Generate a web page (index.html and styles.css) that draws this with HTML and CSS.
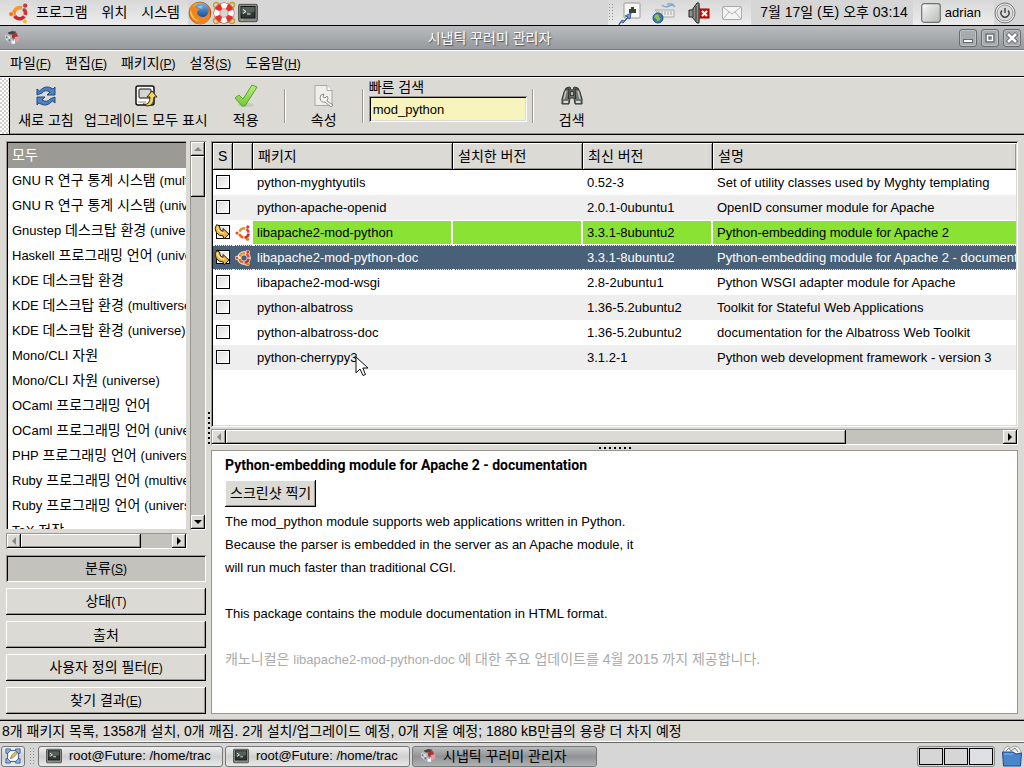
FILE: index.html
```html
<!DOCTYPE html>
<html lang="ko">
<head>
<meta charset="utf-8">
<title>시냅틱 꾸러미 관리자</title>
<link rel="stylesheet" href="styles.css">
</head>
<body>
<svg class="defs" aria-hidden="true">
  <defs>
    <radialGradient id="fox" cx=".4" cy=".3" r=".8"><stop offset="0" stop-color="#ffd34a"/><stop offset=".5" stop-color="#f08a1c"/><stop offset="1" stop-color="#b83b0c"/></radialGradient>
    <linearGradient id="globe" x2="0" y2="1"><stop offset="0" stop-color="#6fb4e8"/><stop offset="1" stop-color="#16488f"/></linearGradient>
    <linearGradient id="metal" x2="1" y2="1"><stop offset="0" stop-color="#fafafa"/><stop offset="1" stop-color="#b4b8b2"/></linearGradient>
    <linearGradient id="tick" x2="0" y2="1"><stop offset="0" stop-color="#b6f07c"/><stop offset="1" stop-color="#74c838"/></linearGradient>
    <symbol id="ubuntu" viewBox="0 0 22 22">
      <g fill="none" stroke-width="3.6">
        <path d="M6.3 9A6 6 0 0 1 14 5.4" stroke="#f39a2b" transform="translate(0 .6)"/>
        <path d="M15.2 6.6A6 6 0 0 1 17.3 13" stroke="#c43a35"/>
        <path d="M16.4 14.4A6 6 0 0 1 6.6 14" stroke="#d2262b"/>
        <path d="M6.3 13.6A6 6 0 0 1 6.2 9" stroke="#ee7c22"/>
      </g>
      <g stroke="#fff" stroke-width=".6"><circle cx="3.2" cy="12" r="2.6" fill="#ee7c22"/><circle cx="17.2" cy="3.6" r="2.6" fill="#c03a44"/><circle cx="17" cy="19.4" r="2.5" fill="#f6bd2c"/></g>
    </symbol>
    <symbol id="ubuntu-small" viewBox="0 0 16 16">
      <g fill="currentColor"><circle cx="9" cy="8" r="4.700" fill="none" stroke="currentColor" stroke-width="4"/><circle cx="2.300" cy="8" r="2.300"/><circle cx="12.600" cy="2.300" r="2.300"/><circle cx="12.300" cy="13.700" r="2.300"/></g>
      <g fill="none" stroke-width="2.6">
        <path d="M4.600 6.600A4.600 4.600 0 0 1 10.200 3.500" stroke="#f28a2c"/>
        <path d="M11.400 4A4.600 4.600 0 0 1 13.6 7.6" stroke="#e8432c"/>
        <path d="M13.6 8.6A4.6 4.6 0 0 1 9.5 12.6" stroke="#d8231f"/>
        <path d="M8.400 12.5A4.6 4.6 0 0 1 4.5 9" stroke="#f0641e"/>
      </g>
      <circle cx="2" cy="8" r="1.600" fill="#ee4b1f"/><circle cx="12.800" cy="1.900" r="1.600" fill="#de3a28"/><circle cx="12.500" cy="14.200" r="1.600" fill="#ef7b20"/>
    </symbol>
    <symbol id="terminal" viewBox="0 0 20 19">
      <rect x=".7" y=".7" width="18.6" height="17.6" rx="1.5" fill="#888b86" stroke="#3e413e"/>
      <rect x="3" y="3" width="14" height="11.5" fill="#2f3734" stroke="#171b19"/>
      <path d="M3.5 3.5h13v5l-13 2z" fill="#56605b"/>
      <path d="M5 6l3 2-3 2M9 10.5h3.5" fill="none" stroke="#fff"/>
      <path d="M3 16.5h2" stroke="#8ae234"/>
    </symbol>
    <symbol id="synaptic" viewBox="0 0 18 18">
      <path d="M1 6l5-4 7 1 4 5-2 5-5 3-5-2-4-4z" fill="#b3b5ba"/>
      <path d="M4 3l5-2 5 1-3 3-5 0z" fill="#4a4043"/>
      <path d="M9 5l5-2 2 4-5 4-2-2z" fill="#a5342e"/>
      <path d="M12 8l5-1 0 5-4 2z" fill="#e79aa1"/>
      <path d="M1 6l6 1v6l-5-2z" fill="#d5dade"/>
      <path d="M2 7l2 .5v2L2 9zM5 10l2 .5V13l-2-.6z" fill="#6b707a"/>
      <path d="M8 10l5 0v6H8z" fill="#f8fafc" stroke="#8590a0" stroke-width=".7"/>
      <path d="M9.500 10h2v2h-2z" fill="#8590a0"/>
    </symbol>
    <symbol id="mark" viewBox="0 0 17 16">
      <path d="M2.500 .8Q6 .6 6 4.300Q6.300 7 9 7.300V4.500l6 5.500-5 5-.8-3Q5 12.200 2.300 8.500Q0 4.500 2.500 .8z" fill="#eab440" stroke="#2b1f08"/>
      <path d="M3.200 2.300Q3.600 8.400 10.200 9.200" fill="none" stroke="#fce9a8" stroke-width="1.300"/>
    </symbol>
  </defs>
</svg>

<header class="panel">
  <nav class="launch">
    <svg class="i22" viewBox="0 0 22 22"><use href="#ubuntu"/></svg>
    <a href="#">프로그램</a><a href="#">위치</a><a href="#">시스템</a>
  </nav>
  <div class="shortcuts">
    <svg class="i24" viewBox="0 0 24 24"><circle cx="12" cy="12" r="11" fill="url(#fox)" stroke="#9a3c10" stroke-width=".6"/><circle cx="13" cy="9.5" r="7.6" fill="url(#globe)"/><path d="M1.5 7Q3 4 5 3q0 3 3 3.500 3 .5 4 2-3 .8-3 3.500 1.500 4 6 4 5 0 6-6 3 7-2 11-5 4-11 1Q2 18 1.500 7z" fill="#ef8420"/><path d="M3 9q1 8 8 11-7 0-9-8z" fill="#ffc94d"/><path d="M9 6q2-2 6-1-2 2-1 3z" fill="#8ec6ee"/></svg>
    <svg class="i24" viewBox="0 0 24 24"><g fill="none" stroke="#c7a21e" stroke-width="1.4"><circle cx="4" cy="4" r="2.500"/><circle cx="20" cy="4" r="2.500"/><circle cx="4" cy="20" r="2.500"/><circle cx="20" cy="20" r="2.500"/></g><circle cx="12" cy="12" r="7.200" fill="none" stroke="#c93a2a" stroke-width="6.600"/><circle cx="12" cy="12" r="7.200" fill="none" stroke="#fff" stroke-width="5.600"/><circle cx="12" cy="12" r="7.200" fill="none" stroke="#e0342a" stroke-width="5.600" stroke-dasharray="5.650 5.650" stroke-dashoffset="8.500"/></svg>
    <svg class="i20" viewBox="0 0 20 19"><use href="#terminal"/></svg>
  </div>
  <div class="tray">
    <i class="dots"></i>
    <svg class="i24" viewBox="0 0 24 24"><rect x="6" y="2" width="16" height="15" rx="1" fill="#f6f6f4" stroke="#9a9c98"/><path d="M11 12V8h2V6h3v2h2v4z" fill="#3c3f3a"/><path d="M1 23l3-4 2 1 4-4-3-1 6-3-1 6-2-1-5 5-2-1-2 3z" fill="#6d9ad2" stroke="#24508c" stroke-width=".8"/></svg>
    <svg class="i24" viewBox="0 0 24 24"><path d="M10 4q3 3 7 1t6 1M15 3q3-1 7 1" fill="none" stroke="#86a8d4" stroke-width="1.500"/><path d="M3 9h19v7H9z" fill="#ecece8" stroke="#a9aba6"/><path d="M6 11h14M6 13h14" stroke="#a9aba6" stroke-dasharray="2 1"/><circle cx="6" cy="17" r="5" fill="#3d74bc" stroke="#24508c"/><path d="M3 14q4-2 4 1t2 2q-2 4-4 3 0-3-3-3zM8 13l2 2" fill="#8fc342"/></svg>
    <svg class="i24" viewBox="0 0 24 24"><path d="M3 9h3l5-7h2v20h-2l-5-6H3z" fill="#8f928c" stroke="#222"/><path d="M7 8v8M10 5v15" stroke="#333"/><path d="M13 4q3 8 0 16" fill="none" stroke="#555"/><rect x="14" y="8" width="9" height="9" fill="#d80c0c" stroke="#a40000"/><path d="M16 10l5 5M21 10l-5 5" stroke="#fff" stroke-width="2"/></svg>
    <svg class="i24" viewBox="0 0 24 24"><rect x="2.500" y="5.500" width="19" height="13" rx="1" fill="#f4f4f4" stroke="#a8a8a8"/><path d="M3 6l9 7 9-7M3 18l6-7M21 18l-6-7" fill="none" stroke="#b2b2b2"/></svg>
  </div>
  <time class="clock">7월 17일 (토) 오후 03:14</time>
  <div class="user">
    <svg class="i20" viewBox="0 0 20 20"><rect x=".7" y=".7" width="18.600" height="18.600" rx="2.500" fill="url(#metal)" stroke="#6f736e" stroke-width="1.200"/></svg>
    <span>adrian</span>
  </div>
  <svg class="i22 power" viewBox="0 0 22 22"><circle cx="11" cy="11" r="10" fill="#eee" stroke="#777"/><circle cx="11" cy="11" r="8" fill="#d9d9d7" stroke="#999"/><path d="M8 8.500a4 4 0 1 0 6 0M11 6v5" fill="none" stroke="#333" stroke-width="1.300"/></svg>
</header>

<div class="titlebar">
  <svg class="i16" viewBox="0 0 18 18"><use href="#synaptic"/></svg>
  <h1>시냅틱 꾸러미 관리자</h1>
  <button class="wm" aria-label="최소화"><svg viewBox="0 0 16 16"><rect x="3.500" y="9.500" width="9" height="3" fill="#fff" stroke="#666b70"/></svg></button>
  <button class="wm" aria-label="최대화"><svg viewBox="0 0 16 16"><rect x="5.500" y="5.500" width="5" height="5" fill="none" stroke="#5f6469" stroke-width="4"/><rect x="5.500" y="5.500" width="5" height="5" fill="#777" stroke="#fff" stroke-width="1.500"/></svg></button>
  <button class="wm" aria-label="닫기"><svg viewBox="0 0 16 16"><path d="M3.500 3.500l9 9M12.500 3.500l-9 9" stroke="#5f6469" stroke-width="4.500"/><path d="M4 4l8 8M12 4l-8 8" stroke="#fff" stroke-width="2.600"/></svg></button>
</div>

<nav class="menubar">
  <a href="#">파일<span class="key">(<u>F</u>)</span></a><a href="#">편집<span class="key">(<u>E</u>)</span></a><a href="#">패키지<span class="key">(<u>P</u>)</span></a><a href="#">설정<span class="key">(<u>S</u>)</span></a><a href="#">도움말<span class="key">(<u>H</u>)</span></a>
</nav>

<div class="toolbar">
  <i class="handle"></i>
  <button class="tool"><svg viewBox="0 0 24 24"><path d="M3 11V5l2.500 2Q12 0 19 5l2-2v8h-8l3-3q-5-3-8 1z" fill="#4f81bf" stroke="#204a87"/><path d="M21 13v6l-2.500-2Q12 24 5 19l-2 2v-8h8l-3 3q5 3 8-1z" fill="#4f81bf" stroke="#204a87"/></svg>새로 고침</button>
  <button class="tool"><svg viewBox="0 0 24 24"><rect x="2" y="2" width="18" height="19" rx="2" fill="#fff" stroke="#111" stroke-width="1.500"/><rect x="5" y="5" width="12" height="9" rx="1" fill="#d4d6d0" stroke="#111"/><path d="M4 18h8" stroke="#888"/><path d="M9 20q7 2 7-7h-3l5-6 5 6h-3q0 9-7 9z" fill="#f3d56f" stroke="#3b2a08"/></svg>업그레이드 모두 표시</button>
  <button class="tool"><svg viewBox="0 0 24 24"><ellipse cx="12" cy="21" rx="8" ry="2" fill="#c8c7c2"/><path d="M1 14l4-3 4 4L18 1l5 2-12 19H8z" fill="url(#tick)" stroke="#5aa02c" stroke-linejoin="round"/></svg>적용</button>
  <i class="sep"></i>
  <button class="tool"><svg viewBox="0 0 24 24"><path d="M3 1.500h12l5 5v15H3z" fill="#efefec" stroke="#a8a8a4"/><path d="M15 1.500v5h5" fill="#fff" stroke="#a8a8a4"/><path d="M8 14q0-4 4-4l-1 3 2 1 2-2q2 2 0 5l6 4-2 2-6-5q-4 1-5-4z" fill="#f8f8f6" stroke="#8b8b87"/></svg>속성</button>
  <i class="sep"></i>
  <div class="quick">
    <label for="quick">빠른 검색</label>
    <input id="quick" type="text" value="mod_python">
  </div>
  <i class="sep"></i>
  <button class="tool"><svg viewBox="0 0 24 24"><path d="M6 4l4-1 1 3h2l1-3 4 1 2 4 2 7v5h-7l-1-6h-4l-1 6H2v-5l2-7z" fill="#6f7470" stroke="#2b2f2d"/><path d="M10 7h4v5h-4z" fill="#3a3e3c"/><path d="M12 8v3" stroke="#b9bcb8" stroke-width="2"/><path d="M3.500 17h4.500v2H3.500zM16 17h4.500v2H16z" fill="#d7d9d6"/><path d="M6 7l-2 8M18 7l2 8" stroke="#c0c3bf" stroke-width="1.500"/><path d="M9 5l-.5 10M15 5l.5 10M6 5h3M15 5h3" stroke="#2e3331" stroke-width="1.200"/></svg>검색</button>
</div>

<main class="main">
  <section class="side">
    <div class="side-grid">
      <ul class="list" role="listbox" aria-label="분류">
        <li class="on" role="option" aria-selected="true">모두</li>
        <li role="option"><span class="latin">GNU R</span> 연구 통계 시스탬 <span class="latin">(multiverse)</span></li>
        <li role="option"><span class="latin">GNU R</span> 연구 통계 시스탬 <span class="latin">(universe)</span></li>
        <li role="option"><span class="latin">Gnustep</span> 데스크탑 환경 <span class="latin">(universe)</span></li>
        <li role="option"><span class="latin">Haskell</span> 프로그래밍 언어 <span class="latin">(universe)</span></li>
        <li role="option"><span class="latin">KDE</span> 데스크탑 환경</li>
        <li role="option"><span class="latin">KDE</span> 데스크탑 환경 <span class="latin">(multiverse)</span></li>
        <li role="option"><span class="latin">KDE</span> 데스크탑 환경 <span class="latin">(universe)</span></li>
        <li role="option"><span class="latin">Mono/CLI</span> 자원</li>
        <li role="option"><span class="latin">Mono/CLI</span> 자원 <span class="latin">(universe)</span></li>
        <li role="option"><span class="latin">OCaml</span> 프로그래밍 언어</li>
        <li role="option"><span class="latin">OCaml</span> 프로그래밍 언어 <span class="latin">(universe)</span></li>
        <li role="option"><span class="latin">PHP</span> 프로그래밍 언어 <span class="latin">(universe)</span></li>
        <li role="option"><span class="latin">Ruby</span> 프로그래밍 언어 <span class="latin">(multiverse)</span></li>
        <li role="option"><span class="latin">Ruby</span> 프로그래밍 언어 <span class="latin">(universe)</span></li>
        <li role="option"><span class="latin">TeX</span> 저작</li>
      </ul>
      <div class="sb v"><button class="up off" aria-label="위로"></button><i class="thumb"></i><button class="down" aria-label="아래로"></button></div>
      <div class="sb h"><button class="left off" aria-label="왼쪽"></button><i class="thumb"></i><button class="right" aria-label="오른쪽"></button></div>
    </div>
    <div class="filters">
      <button class="btn pressed">분류<span class="key">(<u>S</u>)</span></button>
      <button class="btn">상태<span class="key">(T)</span></button>
      <button class="btn">출처</button>
      <button class="btn">사용자 정의 필터<span class="key">(<u>F</u>)</span></button>
      <button class="btn">찾기 결과<span class="key">(<u>E</u>)</span></button>
    </div>
  </section>
  <i class="vgrip"></i>
  <section class="content">
    <div class="tablebox">
      <table class="packages">
        <colgroup><col class="c-s"><col class="c-s"><col class="c-name"><col class="c-ver"><col class="c-ver"><col></colgroup>
        <thead><tr><th>S</th><th></th><th>패키지</th><th>설치한 버전</th><th>최신 버전</th><th>설명</th></tr></thead>
        <tbody>
          <tr><td><input type="checkbox" aria-label="python-myghtyutils"></td><td></td><td>python-myghtyutils</td><td></td><td>0.52-3</td><td>Set of utility classes used by Myghty templating</td></tr>
          <tr><td><input type="checkbox" aria-label="python-apache-openid"></td><td></td><td>python-apache-openid</td><td></td><td>2.0.1-0ubuntu1</td><td>OpenID consumer module for Apache</td></tr>
          <tr class="marked"><td><input type="checkbox" aria-label="libapache2-mod-python"><svg class="mk" viewBox="0 0 17 16"><use href="#mark"/></svg></td><td><svg class="ub" viewBox="0 0 16 16"><use href="#ubuntu-small"/></svg></td><td>libapache2-mod-python</td><td></td><td>3.3.1-8ubuntu2</td><td>Python-embedding module for Apache 2</td></tr>
          <tr class="selected"><td><input type="checkbox" aria-label="libapache2-mod-python-doc"><svg class="mk" viewBox="0 0 17 16"><use href="#mark"/></svg></td><td><svg class="ub" viewBox="0 0 16 16"><use href="#ubuntu-small"/></svg></td><td>libapache2-mod-python-doc</td><td></td><td>3.3.1-8ubuntu2</td><td>Python-embedding module for Apache 2 - documentation</td></tr>
          <tr><td><input type="checkbox" aria-label="libapache2-mod-wsgi"></td><td></td><td>libapache2-mod-wsgi</td><td></td><td>2.8-2ubuntu1</td><td>Python WSGI adapter module for Apache</td></tr>
          <tr><td><input type="checkbox" aria-label="python-albatross"></td><td></td><td>python-albatross</td><td></td><td>1.36-5.2ubuntu2</td><td>Toolkit for Stateful Web Applications</td></tr>
          <tr><td><input type="checkbox" aria-label="python-albatross-doc"></td><td></td><td>python-albatross-doc</td><td></td><td>1.36-5.2ubuntu2</td><td>documentation for the Albatross Web Toolkit</td></tr>
          <tr><td><input type="checkbox" aria-label="python-cherrypy3"></td><td></td><td class="hover">python-cherrypy3<svg class="cursor" viewBox="0 0 14 22"><path d="M1 1v16l4-4 3 6.500 2.500-1L7.800 12H13z" fill="#fff" stroke="#111"/></svg></td><td></td><td>3.1.2-1</td><td>Python web development framework - version 3</td></tr>
        </tbody>
      </table>
    </div>
    <div class="sb h wide"><button class="left off" aria-label="왼쪽"></button><i class="thumb"></i><button class="right" aria-label="오른쪽"></button></div>
    <i class="hgrip"></i>
    <article class="details">
      <h2>Python-embedding module for Apache 2 - documentation</h2>
      <button class="btn shot">스크린샷 찍기</button>
      <p>The mod_python module supports web applications written in Python.<br>Because the parser is embedded in the server as an Apache module, it<br>will run much faster than traditional CGI.</p>
      <p>This package contains the module documentation in HTML format.</p>
      <p class="note">캐노니컬은 <span class="latin">libapache2-mod-python-doc</span> 에 대한 주요 업데이트를 4월 2015 까지 제공합니다.</p>
    </article>
  </section>
</main>

<div class="status">8개 패키지 목록, 1358개 설치, 0개 깨짐. 2개 설치/업그레이드 예정, 0개 지울 예정; 1880 kB만큼의 용량 더 차지 예정</div>

<footer class="taskbar">
  <button class="task desk" aria-label="바탕 화면 보기"><svg viewBox="0 0 18 18"><rect x="3" y="3" width="12" height="12" fill="#fff" stroke="#204a87"/><g fill="#8fb0dc" stroke="#204a87" stroke-width=".8"><path d="M1 1h5v2L3 6H1zM17 1h-5v2l3 3h2zM1 17h5v-2l-3-3H1zM17 17h-5v-2l3-3h2z"/></g><path d="M6 12l1-3 5-5 2 2-5 5z" fill="#f0c24b" stroke="#555" stroke-width=".7"/></svg></button>
  <i class="dots"></i>
  <button class="task"><svg viewBox="0 0 20 19"><use href="#terminal"/></svg><span class="latin">root@Future: /home/trac</span></button>
  <button class="task"><svg viewBox="0 0 20 19"><use href="#terminal"/></svg><span class="latin">root@Future: /home/trac</span></button>
  <button class="task active"><svg viewBox="0 0 18 18"><use href="#synaptic"/></svg><span>시냅틱 꾸러미 관리자</span></button>
  <div class="pager"><i></i><i></i><i class="cur"></i></div>
  <svg class="i22 trash" viewBox="0 0 22 22"><path d="M2 7l2-4 3-2 3 2 3-2 4 1 3 4v3H2z" fill="#f5f5f5" stroke="#8b8f8a" stroke-width=".8"/><path d="M5 6l3-3 2 3 4-3 3 4" fill="none" stroke="#777"/><path d="M1.500 7H12l3 2 5.500-1-1 13h-17z" fill="#4a86cc" stroke="#204a87"/><path d="M3 9h9" stroke="#8db8ea"/></svg>
</footer>
</body>
</html>
```
FILE: styles.css
```css
* { box-sizing: border-box; }

:root {
  --bg: #dbdad5;
  --trough: #c3c2bd;
  --shade: #98968e;
  --raised: inset -1px -1px #000, inset 1px 1px #fff, inset -2px -2px var(--shade);
  --sunken: inset 1px 1px var(--shade), inset -1px -1px #fff, inset 2px 2px #000, inset -2px -2px var(--bg);
}

body {
  margin: 0;
  height: 100vh;
  display: flex;
  flex-direction: column;
  overflow: hidden;
  background: var(--bg);
  color: #000;
  font: 14px/20px "Liberation Sans", "Noto Sans CJK KR", sans-serif;
}

button, input { font: inherit; color: inherit; }
button { background: none; border: 0; padding: 0; }
a { color: inherit; text-decoration: none; }
svg { display: block; flex: none; }
h1, h2, p, ul { margin: 0; padding: 0; }
.defs { position: absolute; width: 0; height: 0; }
.latin { font-size: 13px; }
.key { font-size: 12px; }
.i16 { width: 16px; height: 16px; }
.i20 { width: 20px; height: 20px; }
.i22 { width: 22px; height: 22px; }
.i24 { width: 24px; height: 24px; }

/* top panel */
.panel {
  height: 26px;
  flex: none;
  display: flex;
  align-items: center;
  background: #d6d6d6;
  border-bottom: 1px solid #000;
}
.launch {
  display: flex;
  align-items: center;
  align-self: stretch;
  padding: 0 8px;
  gap: 14px;
  background: linear-gradient(#d8d8d8, #ececec);
}
.launch .i22 { margin-right: -8px; }
.launch a { line-height: 18px; padding-bottom: 2px; }
.shortcuts { display: flex; align-items: center; }
.shortcuts .i20 { margin-left: 2px; }
.tray {
  display: flex;
  align-items: center;
  align-self: stretch;
  gap: 10px;
  margin-left: auto;
  padding-right: 7px;
  background: linear-gradient(#d8d8d8, #ececec);
}
.tray .dots { margin-right: -5px; }
.dots {
  width: 5px;
  height: 19px;
  background: radial-gradient(circle, #8f8f8f 1px, transparent 1px) 0 0 / 3px 3px;
}
.clock { padding: 0 5px 2px 9px; }
.user {
  display: flex;
  align-items: center;
  align-self: stretch;
  gap: 4px;
  padding: 0 13px 0 8px;
  font-size: 13px;
  background: linear-gradient(#d8d8d8, #ececec);
}
.power { margin-right: 8px; }

/* window frame */
.titlebar {
  height: 24px;
  flex: none;
  display: flex;
  align-items: center;
  gap: 4px;
  padding: 0 3px 0 4px;
  background: linear-gradient(#b9bcbf, #96999d);
  border-bottom: 1px solid #777;
}
.titlebar h1 {
  flex: 1;
  text-align: center;
  font-size: 14px;
  font-weight: 400;
  color: #fff;
  text-shadow: 1px 1px 1px #555;
}
.wm {
  width: 18px;
  height: 18px;
  border: 1px solid #676c71;
  border-radius: 3px;
  background: #a8abae;
  box-shadow: inset 0 0 0 1px #bfc2c4;
}
.wm svg { width: 16px; height: 16px; }

.menubar {
  height: 27px;
  flex: none;
  display: flex;
  align-items: center;
  gap: 14px;
  padding: 0 10px;
  border-top: 1px solid #fff;
  border-bottom: 1px solid #000;
}

.toolbar {
  height: 58px;
  flex: none;
  display: flex;
  align-items: center;
  border-top: 1px solid #fff;
  border-bottom: 1px solid #000;
  box-shadow: inset 0 -1px var(--shade);
}
.handle {
  width: 10px;
  align-self: stretch;
  margin-right: 3px;
  border-right: 1px solid #000;
  background: repeating-conic-gradient(#fff 0 25%, #cfcec9 0 50%) 0 0 / 4px 4px;
}
.tool {
  min-width: 66px;
  padding: 1px 5px 0;
  display: flex;
  flex-direction: column;
  align-items: center;
  gap: 2px;
  white-space: nowrap;
}
.tool svg { width: 24px; height: 24px; }
.sep {
  width: 2px;
  height: 34px;
  margin: 0 5px;
  border-left: 1px solid var(--shade);
  border-right: 1px solid #fff;
}
.quick {
  width: 158px;
  display: flex;
  flex-direction: column;
  padding-bottom: 12px;
}
.quick label { line-height: 18px; }
.quick input {
  width: 100%;
  height: 26px;
  padding: 0 4px;
  border: 0;
  outline: 0;
  font-size: 13px;
  background: #f7f5bd;
  box-shadow: var(--sunken);
}

/* body */
.main {
  flex: 1;
  min-height: 0;
  display: flex;
  padding: 6px;
}
.side {
  width: 200px;
  flex: none;
  display: flex;
  flex-direction: column;
  gap: 6px;
}
.side-grid {
  flex: 1;
  min-height: 0;
  display: grid;
  grid-template: minmax(0, 1fr) 16px / minmax(0, 1fr) 16px;
  gap: 3px;
}
.list {
  list-style: none;
  overflow: hidden;
  padding: 2px 0 0 2px;
  background: #fff;
  box-shadow: inset 1px 1px var(--shade), inset 2px 2px #000;
  border-right: 1px solid var(--bg);
  border-bottom: 1px solid var(--bg);
}
.list li {
  height: 25px;
  line-height: 25px;
  padding-left: 4px;
  white-space: nowrap;
  overflow: hidden;
}
.list .on { background: #9c9a94; color: #fff; }

.sb {
  display: flex;
  padding: 1px;
  background: var(--trough);
  box-shadow: inset 1px 1px var(--shade), inset -1px -1px #fff;
}
.sb.v { flex-direction: column; }
.sb button, .thumb { background: var(--bg); box-shadow: var(--raised); }
.sb button {
  width: 14px;
  height: 14px;
  display: grid;
  place-items: center;
}
.sb button::before { content: ""; border: 4px solid transparent; }
.sb .up::before { border-top-width: 0; border-bottom-color: #000; }
.sb .down::before { border-bottom-width: 0; border-top-color: #000; }
.sb .left::before { border-left-width: 0; border-right-color: #000; }
.sb .right::before { border-right-width: 0; border-left-color: #000; }
.sb .up.off::before { border-bottom-color: #888; }
.sb .left.off::before { border-right-color: #888; }
.sb .down { margin-top: auto; }
.sb .right { margin-left: auto; }
.v .thumb { height: 41px; }
.h .thumb { width: 67%; }
.wide .thumb { width: 77%; }
.wide { height: 16px; flex: none; }

.filters { display: flex; flex-direction: column; gap: 6px; }
.btn {
  height: 27px;
  background: var(--bg);
  box-shadow: var(--raised);
}
.pressed { background: var(--trough); box-shadow: inset 1px 1px var(--shade), inset -1px -1px #fff, inset 2px 2px #000; }

.vgrip {
  width: 5px;
  flex: none;
  height: 32px;
  align-self: center;
  background: repeating-linear-gradient(#000 0 2px, transparent 2px 5px) 2px 0 / 2px 100% no-repeat;
}
.content { flex: 1; min-width: 0; display: flex; flex-direction: column; }
.tablebox {
  flex: 1;
  min-height: 0;
  margin-bottom: 2px;
  padding: 2px;
  overflow: hidden;
  background: #fff;
  box-shadow: var(--sunken);
}
.packages {
  width: 100%;
  table-layout: fixed;
  border-spacing: 0;
  font-size: 13px;
}
.c-s { width: 20px; }
.c-name { width: 200px; }
.c-ver { width: 130px; }
.packages th {
  height: 27px;
  padding: 0 5px;
  text-align: left;
  font-weight: 400;
  font-size: 14px;
  background: var(--bg);
  border-bottom: 1px solid #000;
  border-right: 1px solid #000;
  box-shadow: inset 1px 1px #fff, inset -1px -1px var(--shade);
}
.packages th:last-child { border-right: 0; }
.packages td {
  height: 25px;
  padding: 0 4px;
  line-height: 21px;
  white-space: nowrap;
  overflow: hidden;
}
.packages td:first-child { padding: 0 3px 2px; position: relative; }
.packages td:nth-child(2) { padding: 0 2px; }
.packages tr:nth-child(even) td { background: #eee; }
.packages .marked td:nth-child(n+3) {
  background: #8ae234;
  border: solid #fff;
  border-width: 1px 2px 1px 0;
}
.packages .marked td:nth-child(n+3):last-child { border-right: 0; }
.packages .selected:nth-child(n) td {
  background: #486078;
  color: #fff;
  border: dotted #fff;
  border-width: 1px 0;
}
.packages input {
  appearance: none;
  display: block;
  width: 14px;
  height: 14px;
  margin: 0;
  border: 1px solid #000;
  background: linear-gradient(135deg, #d8d8d8, #fff);
  box-shadow: inset 0 0 0 1px #fff;
}
.mk { position: absolute; left: 1px; top: 4px; width: 17px; height: 16px; }
.ub { width: 16px; height: 16px; color: transparent; }
.selected .ub { color: #fff; }
.packages .hover { position: relative; overflow: visible; }
.cursor { position: absolute; left: 102px; top: 11px; width: 14px; height: 22px; }

.hgrip {
  width: 32px;
  height: 5px;
  flex: none;
  align-self: center;
  background: repeating-linear-gradient(90deg, #000 0 2px, transparent 2px 5px) 0 2px / 100% 2px no-repeat;
}
.details {
  flex: 0 1 264px;
  min-height: 0;
  padding: 3px 13px;
  background: #fff;
  border: 1px solid var(--shade);
  overflow: hidden;
  font-size: 13px;
  line-height: 23px;
}
.details h2 { font: 700 14px/23px Roboto, "Liberation Sans", sans-serif; }
.details p { margin-bottom: 23px; }
.shot { display: block; margin: 3px 0; padding: 0 5px; font-size: 14px; }
.details .note { color: #aaa; font-size: 14px; }

.status {
  flex: none;
  height: 22px;
  padding-left: 2px;
  border-top: 1px solid #000;
  border-bottom: 1px solid #fff;
  box-shadow: 0 -1px var(--shade);
  white-space: nowrap;
  overflow: hidden;
}

.taskbar {
  flex: none;
  height: 26px;
  display: flex;
  align-items: center;
  gap: 2px;
  padding: 2px 1px 1px;
  background: #d6d6d6;
  border-top: 1px solid #666;
}
.task {
  flex: 0 1 185px;
  height: 21px;
  display: flex;
  align-items: center;
  gap: 7px;
  padding: 0 7px;
  border: 1px solid #777;
  border-radius: 3px;
  background: linear-gradient(#eee, #d0d0d0 50%, #e8e8e8);
  white-space: nowrap;
  overflow: hidden;
}
.task svg { width: 16px; height: 16px; }
.desk { flex: 0 0 24px; padding: 0 3px; }
.taskbar .dots { margin: 0 2px; }
.active { background: linear-gradient(#bbb, #8f9295 50%, #b0b2b3); }
.pager {
  display: flex;
  gap: 1px;
  margin: 0 4px 0 auto;
  padding: 1px;
  border: 1px solid #888;
  border-radius: 3px;
}
.pager i { width: 24px; height: 17px; border: 1px solid #000; }
.pager .cur { background: #dfe0e3; }
```
